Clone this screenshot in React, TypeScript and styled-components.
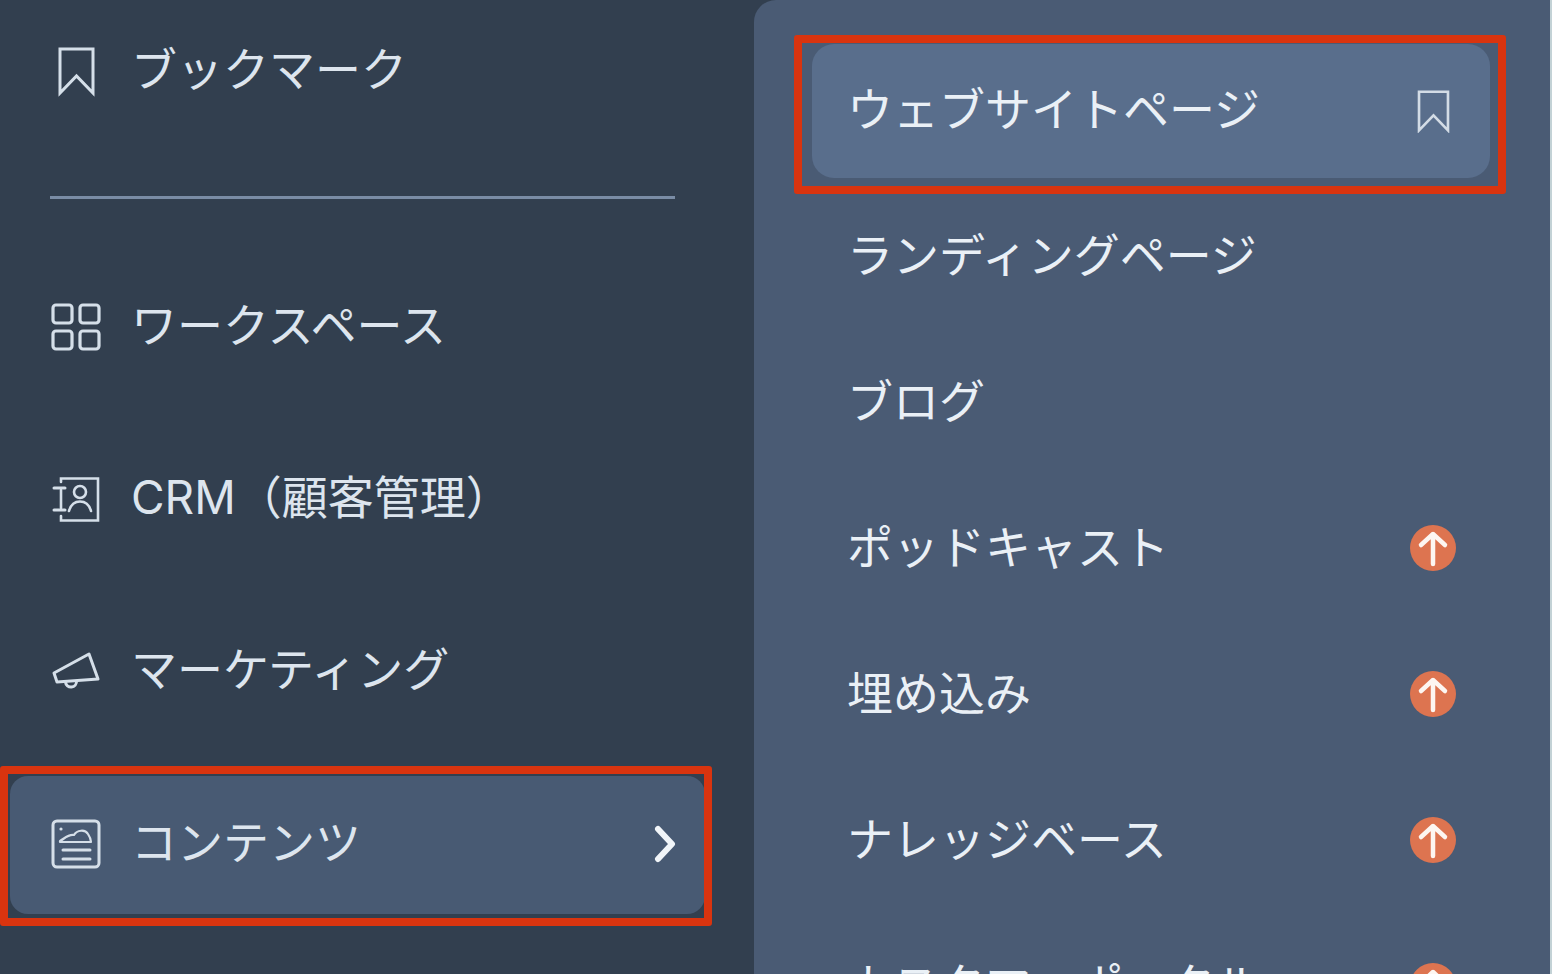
import React from "react";
import styled, { createGlobalStyle } from "styled-components";

const GlobalStyle = createGlobalStyle`
  html, body {
    margin: 0;
    padding: 0;
    height: 100%;
    overflow: hidden;
    background: #323f4f;
  }
`;

const Shell = styled.div`
  display: flex;
  width: 1552px;
  height: 974px;
  overflow: hidden;
  background: #323f4f;
  border-right: 2px solid #c3d2d6;
  box-sizing: border-box;
  font-family: "Inter", "Noto Sans CJK JP", sans-serif;
  font-size: 46px;
  font-weight: 400;
  color: #dde5ee;
`;

const Sidebar = styled.nav`
  flex: 0 0 754px;
  box-sizing: border-box;
  padding: 2px 49px 0 10px;
  display: flex;
  flex-direction: column;
`;

const MainList = styled.div`
  display: flex;
  flex-direction: column;
  gap: 34px;
`;

const Divider = styled.hr`
  width: 625px;
  height: 3px;
  margin: 56px 0 59px 40px;
  border: 0;
  background: #7a8ca5;
`;

const NavRow = styled.div<{ $active?: boolean }>`
  position: relative;
  box-sizing: border-box;
  height: 138px;
  margin-top: ${({ $active }) => ($active ? "2px" : "0")};
  padding: 0 28px ${({ $active }) => ($active ? "3px" : "0")} 40px;
  display: flex;
  align-items: center;
  border-radius: 18px;
  background: ${({ $active }) => ($active ? "#485a73" : "transparent")};
`;

const IconSlot = styled.span`
  flex: 0 0 52px;
  height: 52px;
  margin-right: 29px;
  display: flex;
  align-items: center;
  justify-content: center;
  color: #d5dfe9;

  svg {
    display: block;
    overflow: visible;
  }
`;

const Label = styled.span`
  flex: 1;
  line-height: 1;
  white-space: nowrap;
  position: relative;
  top: -2px;
`;

const Chevron = styled.span`
  display: flex;
  color: #f1f5f9;
`;

const Highlight = styled.span<{ $inset: string }>`
  position: absolute;
  inset: ${({ $inset }) => $inset};
  border: 8px solid #d9340f;
  border-radius: 3px;
  pointer-events: none;
`;

const Submenu = styled.section`
  flex: 1;
  box-sizing: border-box;
  padding: 44px 60px 0 58px;
  display: flex;
  flex-direction: column;
  gap: 12px;
  background: #4a5b74;
  border-top-left-radius: 22px;
`;

const SubRow = styled.div<{ $active?: boolean }>`
  position: relative;
  flex: 0 0 134px;
  padding: 0 34px 0 35px;
  display: flex;
  align-items: center;
  justify-content: space-between;
  border-radius: 22px;
  background: ${({ $active }) => ($active ? "#596e8c" : "transparent")};
  color: #eaf0f6;
`;

const SubLabel = styled.span`
  line-height: 1;
  white-space: nowrap;
  position: relative;
  top: -2px;
`;

const Marker = styled.span`
  flex: 0 0 46px;
  display: flex;
  justify-content: center;
  color: #d3dce6;
`;

const UpgradeBadge = styled.span`
  width: 46px;
  height: 46px;
  margin-top: -2px;
  border-radius: 50%;
  background: #dd7450;
  display: flex;
  align-items: center;
  justify-content: center;
`;

const BookmarkIcon = ({ w, h }: { w: number; h: number }) => (
  <svg width={w} height={h} viewBox="0 0 37 49" fill="none" stroke="currentColor" strokeWidth="3">
    <path d="M2 2H35V46L18.5 29L2 46Z" strokeLinejoin="miter" />
  </svg>
);

const GridIcon = () => (
  <svg width="50" height="48" viewBox="0 0 50 48" fill="none" stroke="currentColor" strokeWidth="3.2">
    <rect x="2" y="2" width="19" height="18" rx="3" />
    <rect x="29" y="2" width="19" height="18" rx="3" />
    <rect x="2" y="28" width="19" height="18" rx="3" />
    <rect x="29" y="28" width="19" height="18" rx="3" />
  </svg>
);

const ContactIcon = () => (
  <svg width="48" height="48" viewBox="0 0 48 48" fill="none" stroke="currentColor" strokeWidth="2.6" strokeLinecap="round">
    <path d="M9 7V3.5H46V45.5H9V41" />
    <path d="M9 15V33" />
    <path d="M2 13H13M2 35H13" strokeWidth="3" />
    <circle cx="28" cy="17" r="6" />
    <path d="M17 36C19 29 23 26.5 28 26.5S37 29 39 36" />
  </svg>
);

const MegaphoneIcon = () => (
  <svg width="48" height="44" viewBox="0 0 48 44" fill="none" stroke="currentColor" strokeWidth="3" strokeLinejoin="round">
    <path d="M2 24L37 5L46 30L5 33Z" />
    <path d="M13.5 33A5.5 5.5 0 0 0 24.5 32" />
  </svg>
);

const ContentIcon = () => (
  <svg width="50" height="50" viewBox="0 0 50 50" fill="none" stroke="currentColor" strokeLinecap="round">
    <rect x="2" y="2" width="46" height="46" rx="4" strokeWidth="3" />
    <circle cx="10" cy="10" r="1.6" fill="currentColor" stroke="none" />
    <path d="M9 22C13 20 17 15 23 16C26 11 34 10 37 15C39 18 40 20 40 23H9Z" strokeWidth="2.2" strokeLinejoin="round" />
    <path d="M12 31H39M12 40H39" strokeWidth="3" />
  </svg>
);

const ChevronIcon = () => (
  <svg width="24" height="38" viewBox="0 0 24 38" fill="none" stroke="currentColor" strokeWidth="6" strokeLinecap="round" strokeLinejoin="round">
    <path d="M5 4L19 19L5 34" />
  </svg>
);

const ArrowUpIcon = () => (
  <svg width="46" height="46" viewBox="0 0 46 46" fill="none" stroke="#fdf6f1" strokeWidth="4.5" strokeLinecap="round" strokeLinejoin="round">
    <path d="M23 39V9M11 20L23 9L35 20" />
  </svg>
);

const navItems = [
  { label: "ワークスペース", icon: <GridIcon /> },
  { label: "CRM（顧客管理）", icon: <ContactIcon /> },
  { label: "マーケティング", icon: <MegaphoneIcon /> },
];

const subItems = [
  { label: "ランディングページ" },
  { label: "ブログ" },
  { label: "ポッドキャスト", upgrade: true },
  { label: "埋め込み", upgrade: true },
  { label: "ナレッジベース", upgrade: true },
  { label: "カスタマーポータル", upgrade: true },
];

export default function App() {
  return (
    <Shell>
      <GlobalStyle />
      <Sidebar>
        <NavRow>
          <IconSlot>
            <BookmarkIcon w={37} h={49} />
          </IconSlot>
          <Label>ブックマーク</Label>
        </NavRow>
        <Divider />
        <MainList>
          {navItems.map((item) => (
            <NavRow key={item.label}>
              <IconSlot>{item.icon}</IconSlot>
              <Label>{item.label}</Label>
            </NavRow>
          ))}
          <NavRow $active>
            <IconSlot>
              <ContentIcon />
            </IconSlot>
            <Label>コンテンツ</Label>
            <Chevron>
              <ChevronIcon />
            </Chevron>
            <Highlight $inset="-10px -7px -12px -10px" />
          </NavRow>
        </MainList>
      </Sidebar>
      <Submenu>
        <SubRow $active>
          <SubLabel>ウェブサイトページ</SubLabel>
          <Marker>
            <BookmarkIcon w={33} h={43} />
          </Marker>
          <Highlight $inset="-9px -16px -16px -18px" />
        </SubRow>
        {subItems.map((item) => (
          <SubRow key={item.label}>
            <SubLabel>{item.label}</SubLabel>
            {item.upgrade && (
              <UpgradeBadge>
                <ArrowUpIcon />
              </UpgradeBadge>
            )}
          </SubRow>
        ))}
      </Submenu>
    </Shell>
  );
}
